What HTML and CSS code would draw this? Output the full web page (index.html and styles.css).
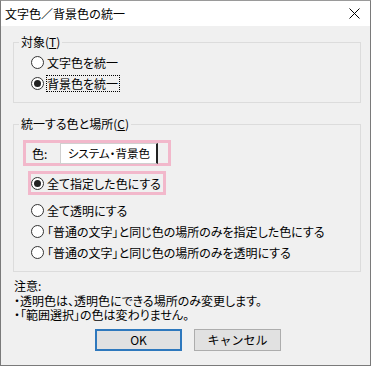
FILE: index.html
```html
<!DOCTYPE html>
<html lang="ja">
<head>
  <meta charset="UTF-8">
  <title>文字色／背景色の統一</title>
  <link rel="stylesheet" href="styles.css">
</head>
<body>
  <div class="window">
    <div class="titlebar">
      <span class="title">文字色／背景色の統一</span>
      <svg class="close" width="11" height="11" viewBox="0 0 11 11">
        <path d="M0.5 0.5 L10.5 10.5 M10.5 0.5 L0.5 10.5" stroke="#000" stroke-width="1" fill="none"/>
      </svg>
    </div>

    <div class="content">
      <fieldset class="group group-target">
        <legend>対象(<u>T</u>)</legend>
        <div class="options">
          <label class="row"><span class="radio"></span><span>文字色を統一</span></label>
          <label class="row"><span class="radio checked"></span><span class="focus">背景色を統一</span></label>
        </div>
      </fieldset>

      <fieldset class="group group-place">
        <legend>統一する色と場所(<u>C</u>)</legend>
        <div class="highlight color-pick">
          <span class="color-label">色:</span>
          <span class="color-field">システム・背景色</span>
        </div>
        <div class="highlight choice">
          <label class="row"><span class="radio checked"></span><span>全て指定した色にする</span></label>
        </div>
        <div class="options more">
          <label class="row"><span class="radio"></span><span>全て透明にする</span></label>
          <label class="row"><span class="radio"></span><span>「普通の文字」と同じ色の場所のみを指定した色にする</span></label>
          <label class="row"><span class="radio"></span><span>「普通の文字」と同じ色の場所のみを透明にする</span></label>
        </div>
      </fieldset>

      <div class="notes">
        <div>注意:</div>
        <div>・透明色は、透明色にできる場所のみ変更します。</div>
        <div>・「範囲選択」の色は変わりません。</div>
      </div>

      <div class="buttons">
        <button class="btn btn-default">OK</button>
        <button class="btn">キャンセル</button>
      </div>
    </div>
  </div>
</body>
</html>
```

FILE: styles.css
```css
body {
  margin: 0;
  font-family: "Noto Sans CJK JP", "Noto Sans", sans-serif;
  font-size: 12px;
  font-feature-settings: "palt";
  color: #000;
  background: #f0f0f0;
}
.window {
  width: 371px;
  height: 366px;
  box-sizing: border-box;
  border: 1px solid #7a7a7a;
  border-top-color: #9a9a9a;
  background: #f0f0f0;
}
.titlebar {
  height: 25px;
  background: #fff;
  display: flex;
  align-items: center;
  justify-content: space-between;
  padding: 0 10px 0 4px;
}
.title {
  font-size: 12px;
  line-height: 16px;
  font-feature-settings: normal;
}
.content {
  padding: 8px 9px 0 12px;
}
.group {
  margin: 0;
  border: 1px solid #dcdcdc;
  padding: 0 8px 8px 5px;
}
.group legend {
  padding: 0 2px;
  line-height: 16px;
}
.group-place {
  margin-top: 13px;
}
.options {
  padding-left: 12px;
  padding-top: 2px;
}
.row {
  display: flex;
  align-items: center;
  height: 21px;
  gap: 3px;
  white-space: nowrap;
}
.radio {
  width: 11px;
  height: 11px;
  border: 1px solid #333;
  border-radius: 50%;
  background: #fff;
  display: flex;
  align-items: center;
  justify-content: center;
  flex-shrink: 0;
}
.radio.checked::after {
  content: "";
  width: 7px;
  height: 7px;
  border-radius: 50%;
  background: #222;
}
.focus {
  outline: 1px dotted #000;
  outline-offset: 0;
  line-height: 15px;
  padding: 0 1px 0 0;
}
.highlight {
  border: 3px solid #f2b8cb;
}
.color-pick {
  margin: 8px 0 0 4px;
  width: 136px;
  height: 20px;
  display: flex;
  align-items: flex-start;
  gap: 13px;
  padding-left: 6px;
  box-sizing: content-box;
}
.color-label {
  line-height: 22px;
}
.color-field {
  width: 95px;
  height: 19px;
  background: #fff;
  border: 1px solid #d0d0d0;
  border-right: 2px solid #222;
  text-align: center;
  line-height: 19px;
  font-size: 11.5px;
}
.choice {
  margin: 5px 0 0 9px;
  width: 132px;
  height: 18px;
  padding-left: 0;
}
.choice .row {
  height: 18px;
  padding-left: 0;
}
.more {
  padding-top: 5px;
}
.notes {
  margin-top: 7px;
  padding-left: 1px;
  line-height: 14.5px;
}
.buttons {
  display: flex;
  gap: 12px;
  margin-top: 6px;
  padding-left: 82px;
}
.btn {
  width: 87px;
  height: 22px;
  box-sizing: border-box;
  font-family: inherit;
  font-size: 12px;
  background: #e1e1e1;
  border: 1px solid #adadad;
  padding: 0;
  color: #000;
}
.btn-default {
  border: 2px solid #2e78bd;
}
```
